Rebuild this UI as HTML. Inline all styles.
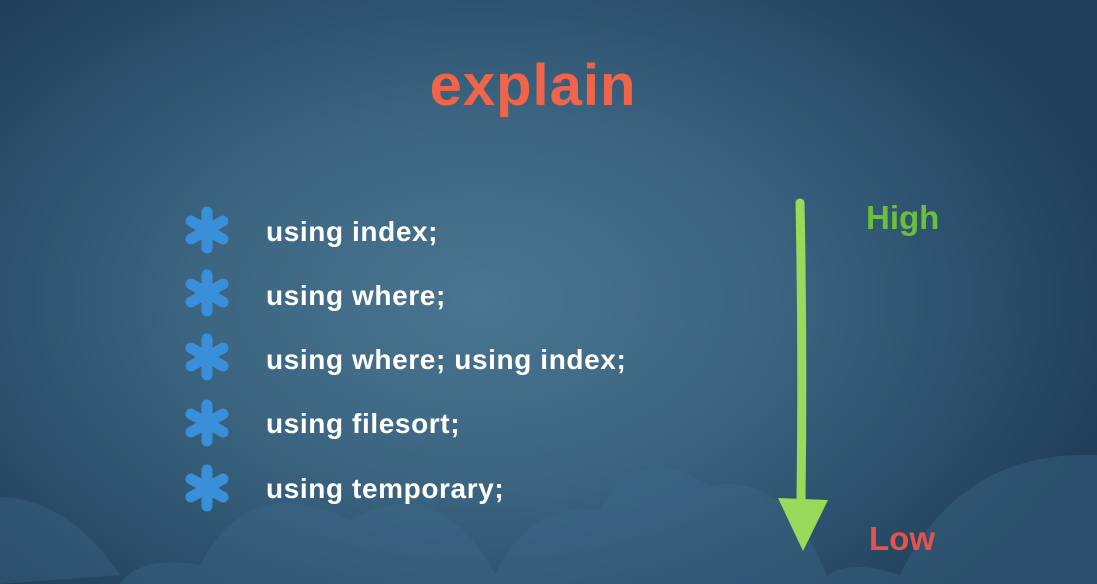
<!DOCTYPE html>
<html><head><style>
body{margin:0;width:1097px;height:584px;overflow:hidden;position:relative;
background:radial-gradient(ellipse 650px 420px at 480px 300px,#4a7590 0%,#3a6480 45%,#2a4d6a 80%,#203f5a 100%);
font-family:"Liberation Sans",sans-serif;}
.t{position:absolute;left:0;width:1066px;text-align:center;top:52px;font-size:58px;font-weight:bold;color:#f0654a;letter-spacing:1px}
.i{position:absolute;left:266px;color:#fff;font-size:28px;font-weight:bold;letter-spacing:.6px}
.s{position:absolute;left:181px;width:52px;height:52px}
</style></head><body>
<svg width="1097" height="584" style="position:absolute;left:0;top:0">
<g fill="#3d6887" opacity="0.4">
<path d="M0 497 Q70 500 120 575 L0 584Z"/>
<path d="M120 584 Q140 555 200 565 Q250 470 350 520 Q440 470 495 575 Q530 500 600 510 Q640 440 710 486 Q790 470 830 585Z"/>
<path d="M820 584 Q840 555 900 575 Q960 450 1097 455 L1097 584Z"/>
</g>
<path d="M800 203 Q803 350 801 500" stroke="#9bd95a" stroke-width="9" fill="none" stroke-linecap="round"/>
<path d="M778 498 L828 500 L803 551Z" fill="#9bd95a"/>
</svg>
<div class="t">explain</div>
<div style="position:absolute;left:866px;top:199px;font-size:33px;font-weight:bold;color:#6abf3f">High</div>
<div style="position:absolute;left:869px;top:520px;font-size:33px;font-weight:bold;color:#e5534b">Low</div>
<svg class="s" style="top:204px" viewBox="-26 -26 52 52"><g stroke="#3a90d8" stroke-width="11" stroke-linecap="round"><path d="M0-18V18M-16-9L16 9M-16 9L16-9"/></g></svg>
<svg class="s" style="top:267px" viewBox="-26 -26 52 52"><g stroke="#3a90d8" stroke-width="11" stroke-linecap="round"><path d="M0-18V18M-16-9L16 9M-16 9L16-9"/></g></svg>
<svg class="s" style="top:331px" viewBox="-26 -26 52 52"><g stroke="#3a90d8" stroke-width="11" stroke-linecap="round"><path d="M0-18V18M-16-9L16 9M-16 9L16-9"/></g></svg>
<svg class="s" style="top:397px" viewBox="-26 -26 52 52"><g stroke="#3a90d8" stroke-width="11" stroke-linecap="round"><path d="M0-18V18M-16-9L16 9M-16 9L16-9"/></g></svg>
<svg class="s" style="top:462px" viewBox="-26 -26 52 52"><g stroke="#3a90d8" stroke-width="11" stroke-linecap="round"><path d="M0-18V18M-16-9L16 9M-16 9L16-9"/></g></svg>
<div class="i" style="top:216px">using index;</div>
<div class="i" style="top:280px">using where;</div>
<div class="i" style="top:344px">using where; using index;</div>
<div class="i" style="top:408px">using filesort;</div>
<div class="i" style="top:473px">using temporary;</div>
</body></html>
